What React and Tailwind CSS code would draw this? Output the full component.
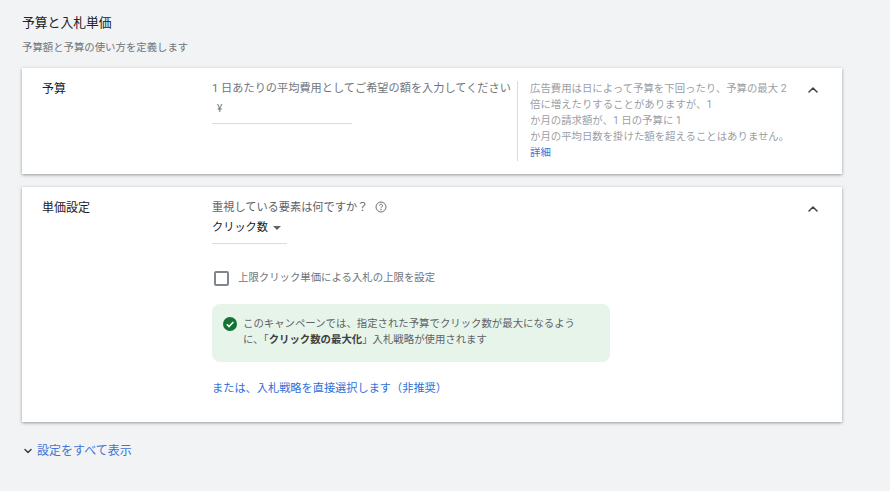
import React from "react";
import { ChevronUp, ChevronDown } from "lucide-react";

function Collapse({ className }) {
  return (
    <div className={className}>
      <ChevronUp className="mt-[1px] h-[16px] w-[16px] text-[#3c4043]" strokeWidth={2.2} />
    </div>
  );
}

export default function App() {
  return (
    <div className="h-[491px] w-[890px] overflow-hidden bg-[#f1f3f4] pl-[22px] pt-[14px] font-['Roboto','Noto_Sans_CJK_JP',sans-serif]">
      <h2 className="text-[12.8px] leading-[18px] text-[#202124]">予算と入札単価</h2>
      <p className="mt-[8px] text-[10.4px] leading-[16px] text-[#70757a]">予算額と予算の使い方を定義します</p>

      {/* Budget card */}
      <section className="mt-[12px] flex h-[106px] w-[820px] bg-white pt-[13px] shadow-[0_1px_3px_rgba(60,64,67,0.5)]">
        <div className="w-[190px] shrink-0 pl-[20px] text-[12px] leading-[16px] text-[#202124]">予算</div>
        <div className="w-[305px] shrink-0">
          <p className="whitespace-nowrap text-[11.2px] leading-[16px] text-[#70757a]">1 日あたりの平均費用としてご希望の額を入力してください</p>
          <div className="mt-[4px] h-[23px] w-[140px] border-b border-[#dadce0] pl-[5px] text-[10px] leading-[16px] text-[#70757a]">¥</div>
        </div>
        <div className="h-[80px] w-[282px] shrink-0 border-l border-[#dadce0] pl-[12px] text-[10.4px] leading-[16px] text-[#9aa0a6]">
          <p className="whitespace-nowrap">広告費用は日によって予算を下回ったり、予算の最大 2</p>
          <p className="whitespace-nowrap">倍に増えたりすることがありますが、1</p>
          <p className="whitespace-nowrap">か月の請求額が、1 日の予算に 1</p>
          <p className="whitespace-nowrap">か月の平均日数を掛けた額を超えることはありません。</p>
          <a className="text-[#4a6fd0]">詳細</a>
        </div>
        <Collapse className="w-[23px] shrink-0 pl-[6px]" />
      </section>

      {/* Bidding card */}
      <section className="mt-[13px] flex h-[235px] w-[820px] bg-white pt-[13px] shadow-[0_1px_3px_rgba(60,64,67,0.5)]">
        <div className="w-[190px] shrink-0 pl-[20px] text-[12px] leading-[16px] text-[#202124]">単価設定</div>
        <div className="w-[588px] shrink-0">
          <div className="flex items-center text-[11.2px] leading-[16px] text-[#5f6368]">
            <span>重視している要素は何ですか？</span>
            <svg viewBox="0 0 24 24" className="mb-[2px] ml-[7px] h-[12px] w-[12px] fill-none stroke-[#5f6368]" strokeWidth="1.8">
              <circle cx="12" cy="12" r="10" />
              <path d="M9 9.5a3 3 0 1 1 4.6 2.5c-1 .7-1.6 1.3-1.6 2.5" />
              <circle cx="12" cy="17.6" r="0.6" />
            </svg>
          </div>
          <div className="mt-[4px] flex h-[24px] w-[75px] items-start border-b border-[#dadce0] text-[11.2px] leading-[16px] text-[#202124]">
            <span>クリック数</span>
            <span className="ml-[5px] mt-[6px] h-0 w-0 border-x-[4px] border-t-[4px] border-x-transparent border-t-[#5f6368]" />
          </div>
          <div className="mt-[26px] flex items-center pl-[2px]">
            <span className="h-[15px] w-[15px] rounded-[2px] border-2 border-[#80868b] bg-white" />
            <span className="ml-[9px] text-[10.4px] leading-[16px] text-[#70757a]">上限クリック単価による入札の上限を設定</span>
          </div>
          <div className="mt-[18px] flex h-[58px] w-[398px] rounded-[8px] bg-[#e6f4ea] pl-[11px] pt-[12px]">
            <svg viewBox="0 0 24 24" className="mt-[1px] h-[14px] w-[14px] shrink-0">
              <circle cx="12" cy="12" r="12" fill="#137333" />
              <path d="M6.5 12.5l3.8 3.8 7.5-7.8" fill="none" stroke="#fff" strokeWidth="2.8" />
            </svg>
            <p className="ml-[6px] text-[10.4px] leading-[16px] text-[#5f6368]">
              このキャンペーンでは、指定された予算でクリック数が最大になるよう<br />
              に、「<b className="font-bold text-[#3c4043]">クリック数の最大化</b>」入札戦略が使用されます
            </p>
          </div>
          <a className="mt-[19px] block text-[11.2px] leading-[16px] text-[#2f6fd8]">または、入札戦略を直接選択します（非推奨）</a>
        </div>
        <Collapse className="w-[32px] shrink-0 pl-[5px]" />
      </section>

      <div className="mt-[21px] flex items-center">
        <ChevronDown className="h-[12px] w-[12px] text-[#3c4043]" strokeWidth={3} />
        <a className="ml-[3px] text-[12px] leading-[16px] text-[#3f74d4]">設定をすべて表示</a>
      </div>
    </div>
  );
}
